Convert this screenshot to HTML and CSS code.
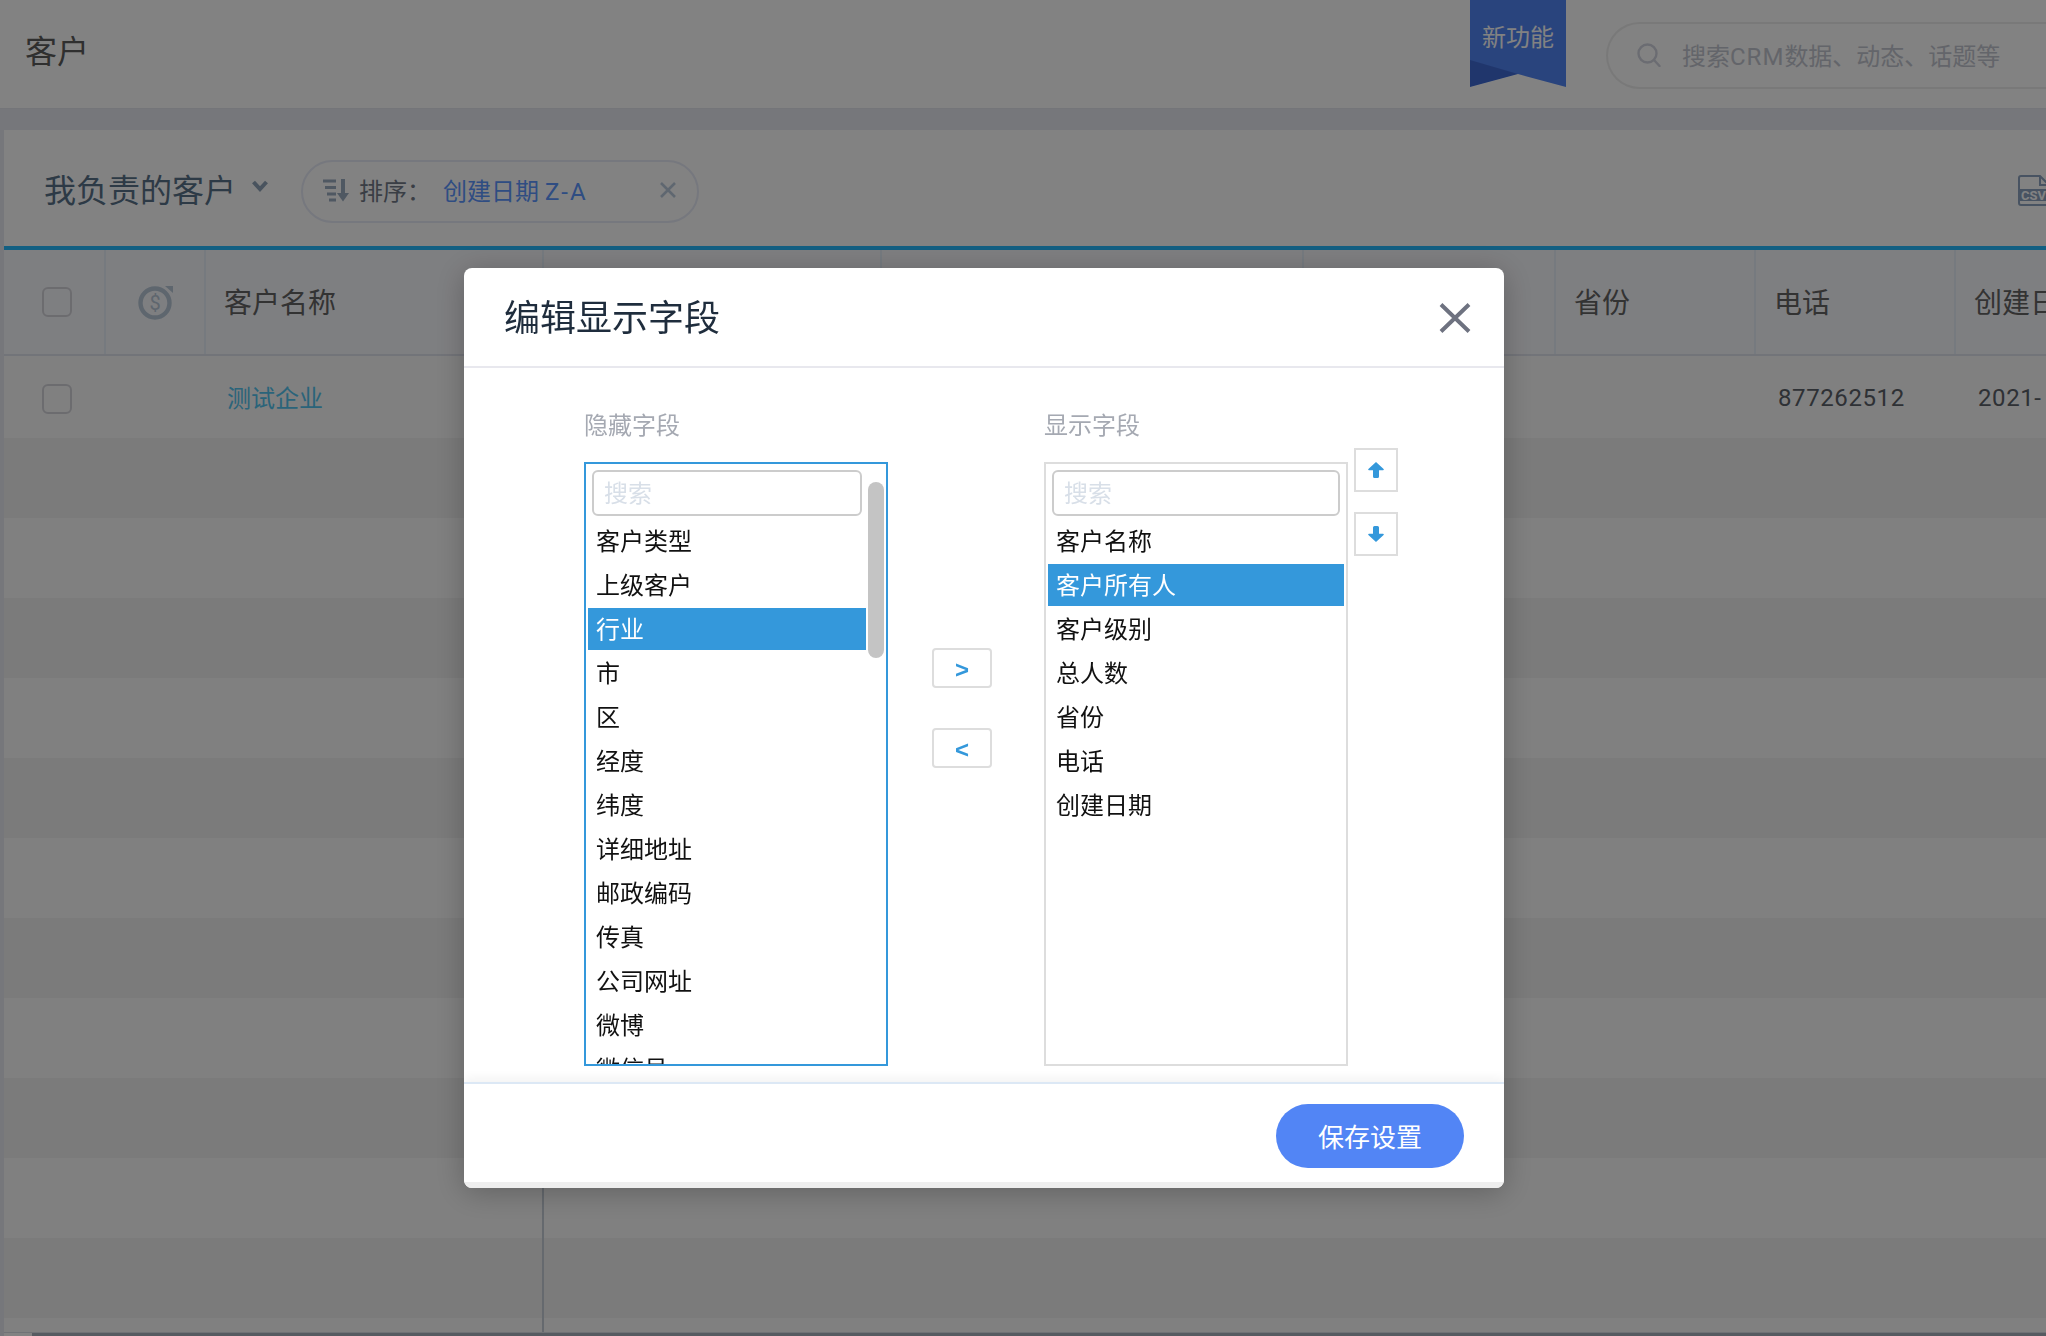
FILE: index.html
```html
<!DOCTYPE html>
<html lang="zh-CN">
<head>
    <meta charset="UTF-8">
    <title>客户</title>
    <link rel="stylesheet" href="styles.css">
</head>
<body>
    <header class="top-bar">
        <div class="page-title">客户</div>
        <div class="ribbon">新功能</div>
        <div class="global-search">
            <svg class="search-icon" width="24" height="24" viewBox="0 0 24 24" fill="none" stroke="currentColor" stroke-width="2.4">
                <circle cx="10.5" cy="10.5" r="9"/>
                <path d="M17 17l5.5 6" stroke-linecap="round"/>
            </svg>
            <span>搜索<span class="search-latin">CRM</span>数据、动态、话题等</span>
        </div>
    </header>

    <section class="panel">
        <div class="toolbar">
            <div class="view-name">我负责的客户</div>
            <svg class="view-caret" width="16" height="12" viewBox="0 0 16 12" fill="none" stroke="currentColor" stroke-width="4">
                <path d="M1.5 2l6.5 7 6.500-7"/>
            </svg>
            <div class="sort-pill">
                <svg class="sort-icon" width="26" height="24" viewBox="0 0 26 24" fill="none" stroke="currentColor" stroke-width="2.800">
                    <path d="M0 3h13M2 9.500h11M4 16h9M6 22h7"/>
                    <path d="M20 1v18" stroke-width="4"/>
                    <path d="M14 15h12L20 23.500z" fill="currentColor" stroke="none"/>
                </svg>
                <span class="sort-label">排序：</span>
                <span class="sort-value">创建日期 <span class="sort-order">Z-A</span></span>
                <svg class="sort-clear" width="16" height="16" viewBox="0 0 16 16" stroke="currentColor" stroke-width="2.600">
                    <path d="M1 1l14 14M15 1L1 15"/>
                </svg>
            </div>
            <svg class="csv-icon" width="34" height="32" viewBox="0 0 34 32">
                <path d="M3 1h19l9 9v20H3a2 2 0 0 1-2-2V3a2 2 0 0 1 2-2z" fill="none" stroke="currentColor" stroke-width="2"/>
                <path d="M22 1v9h9" fill="none" stroke="currentColor" stroke-width="2"/>
                <rect x="1" y="14" width="33" height="12" fill="currentColor"/>
                <text x="3" y="24.500" class="csv-text">CSV</text>
            </svg>
        </div>

        <div class="table-head">
            <div class="cell"><span class="checkbox"></span></div>
            <div class="cell cell-coin">
                <svg width="36" height="36" viewBox="0 0 36 36" fill="none" stroke="currentColor" stroke-width="4.400">
                    <circle cx="17" cy="19" r="14.500"/>
                    <path d="M27 2h8v7z" fill="currentColor" stroke="none"/>
                    <text x="17" y="26" class="coin-text">$</text>
                </svg>
            </div>
            <div class="cell">客户名称</div>
            <div class="cell"></div>
            <div class="cell"></div>
            <div class="cell"></div>
            <div class="cell">省份</div>
            <div class="cell">电话</div>
            <div class="cell">创建日期</div>
        </div>

        <div class="table-body">
            <div class="row row-first">
                <div class="cell"><span class="checkbox"></span></div>
                <div class="cell"></div>
                <div class="cell"><a class="name-link">测试企业</a></div>
                <div class="cell"></div>
                <div class="cell"></div>
                <div class="cell"></div>
                <div class="cell"></div>
                <div class="cell number">877262512</div>
                <div class="cell number">2021-</div>
            </div>
            <div class="row"></div>
            <div class="row"></div>
            <div class="row"></div>
            <div class="row"></div>
            <div class="row"></div>
            <div class="row"></div>
            <div class="row"></div>
            <div class="row"></div>
            <div class="row"></div>
            <div class="row"></div>
            <div class="row"></div>
            <div class="row"></div>
        </div>
        <div class="table-scroll"></div>
    </section>

    <div class="overlay"></div>

    <div class="modal">
        <div class="modal-head">
            <h2>编辑显示字段</h2>
            <svg class="modal-close" width="32" height="30" viewBox="0 0 32 30" stroke="currentColor" stroke-width="4">
                <path d="M2 1.500l28 27M30 1.500l-28 27"/>
            </svg>
        </div>
        <div class="modal-body">
            <div class="field-col">
                <div class="field-label">隐藏字段</div>
                <div class="field-box field-box-active">
                    <input class="field-search" type="text" placeholder="搜索">
                    <div class="option">客户类型</div>
                    <div class="option">上级客户</div>
                    <div class="option selected">行业</div>
                    <div class="option">市</div>
                    <div class="option">区</div>
                    <div class="option">经度</div>
                    <div class="option">纬度</div>
                    <div class="option">详细地址</div>
                    <div class="option">邮政编码</div>
                    <div class="option">传真</div>
                    <div class="option">公司网址</div>
                    <div class="option">微博</div>
                    <div class="option">微信号</div>
                    <div class="scroll-thumb"></div>
                </div>
            </div>
            <div class="move-col">
                <button class="move-btn">&gt;</button>
                <button class="move-btn">&lt;</button>
            </div>
            <div class="field-col">
                <div class="field-label">显示字段</div>
                <div class="field-box">
                    <input class="field-search" type="text" placeholder="搜索">
                    <div class="option">客户名称</div>
                    <div class="option selected">客户所有人</div>
                    <div class="option">客户级别</div>
                    <div class="option">总人数</div>
                    <div class="option">省份</div>
                    <div class="option">电话</div>
                    <div class="option">创建日期</div>
                </div>
            </div>
            <div class="order-col">
                <button class="order-btn">
                    <svg width="16" height="16" viewBox="0 0 16 16" fill="currentColor">
                        <path d="M8 0l7.600 7a.7.7 0 0 1-.5 1.200H11v6.300A1.500 1.500 0 0 1 9.500 16h-3A1.500 1.500 0 0 1 5 14.500V8.200H.9A.7.7 0 0 1 .4 7z"/>
                    </svg>
                </button>
                <button class="order-btn">
                    <svg width="16" height="16" viewBox="0 0 16 16" fill="currentColor">
                        <path d="M8 16L.4 9a.7.7 0 0 1 .5-1.200H5V1.500A1.500 1.500 0 0 1 6.500 0h3A1.500 1.500 0 0 1 11 1.500v6.300h4.100a.7.7 0 0 1 .5 1.200z"/>
                    </svg>
                </button>
            </div>
        </div>
        <div class="modal-foot">
            <button class="save-btn">保存设置</button>
        </div>
    </div>
</body>
</html>
```

FILE: styles.css
```css
* {
    box-sizing: border-box;
}
html, body {
    height: 100%;
}
body {
    margin: 0;
    height: 1336px;
    overflow: hidden;
    background: #e8e9f2;
    font-family: Roboto, "Noto Sans CJK SC", sans-serif;
    font-size: 24px;
    color: #666;
}

/* top bar */
.top-bar {
    display: flex;
    height: 109px;
    background: #fff;
    border-bottom: 1px solid #e4e5ee;
}
.page-title {
    flex: 1;
    padding: 30px 0 0 25px;
    font-size: 32px;
    line-height: 44px;
    color: #5c5c5c;
}
.ribbon {
    position: relative;
    width: 96px;
    height: 87px;
    padding-top: 21px;
    line-height: 34px;
    text-align: center;
    color: #fff;
    background: #5285f5;
    clip-path: polygon(0 0, 100% 0, 100% 100%, 50% 74px, 0 100%);
}
.ribbon::after {
    content: "";
    position: absolute;
    left: 0;
    top: 60px;
    width: 48px;
    height: 27px;
    background: rgba(10, 30, 120, 0.25);
    clip-path: polygon(0 0, 100% 52%, 0 100%);
}
.global-search {
    display: flex;
    align-items: center;
    flex: 0 0 440px;
    height: 67px;
    margin: 22px 0 0 40px;
    padding: 0 0 2px 29px;
    border: 2px solid #eee;
    border-right: none;
    border-radius: 34px 0 0 34px;
    color: #c3c6d0;
    white-space: nowrap;
}
.search-icon {
    margin-right: 21px;
    color: #d2d5df;
}
.search-latin {
    letter-spacing: 1px;
}

/* customer panel */
.panel {
    margin: 21px 0 0 4px;
    background: #fff;
    overflow: hidden;
}
.toolbar {
    display: flex;
    align-items: center;
    height: 116px;
    padding: 6px 0 0 40px;
}
.view-name {
    font-size: 32px;
    line-height: 44px;
    color: #58728a;
    margin-top: -1px;
}
.view-caret {
    margin: -10px 0 0 16px;
    color: #90a4b8;
}
.sort-pill {
    display: flex;
    align-items: center;
    width: 398px;
    height: 63px;
    margin-left: 33px;
    padding: 0 0 3px 20px;
    border: 2px solid #e8ebf8;
    border-radius: 32px;
}
.sort-icon {
    color: #9bacc0;
}
.sort-label {
    margin-left: 10px;
    width: 84px;
    color: #727a88;
}
.sort-value {
    width: 217px;
    color: #5c97ff;
    white-space: nowrap;
}
.sort-order {
    letter-spacing: 2px;
}
.sort-clear {
    color: #bacadc;
}
.csv-icon {
    flex: none;
    margin-left: auto;
    margin-right: -6px;
    color: #8ea4c0;
}
.csv-text {
    font-size: 13px;
    font-weight: 700;
    fill: #fff;
}

/* table */
.table-head, .row-first {
    display: grid;
    grid-template-columns: 102px 100px 338px 338px 422px 252px 200px 200px 200px;
}
.table-head {
    height: 110px;
    border-top: 4px solid #25baff;
    border-bottom: 2px solid #e0e3ed;
    background: #f8f9fd;
    font-size: 28px;
    color: #646464;
}
.table-head .cell {
    display: flex;
    align-items: center;
    padding: 0 0 2px 18px;
    border-right: 2px solid #e7f0fa;
    white-space: nowrap;
}
.table-head .cell-coin {
    justify-content: center;
    padding: 0 0 0 2px;
    color: #b8c8d8;
}
.coin-text {
    font-size: 20px;
    text-anchor: middle;
    fill: currentColor;
    stroke: none;
}
.checkbox {
    display: block;
    width: 30px;
    height: 30px;
    border: 2px solid #d4d4da;
    border-radius: 6px;
}
.table-head .cell:first-child {
    padding: 0 0 0 38px;
}
.table-body {
    position: relative;
    height: 976px;
    overflow: hidden;
}
.table-body::after {
    content: "";
    position: absolute;
    left: 538px;
    top: 0;
    bottom: 0;
    width: 2px;
    background: #c6ced8;
}
.row {
    height: 80px;
    background: #fbfbfb;
}
.row:nth-child(even) {
    background: #f1f1f1;
}
.row-first {
    height: 82px;
    color: #5a6068;
}
.row-first .cell {
    display: flex;
    align-items: center;
    padding: 0 0 2px 21px;
    white-space: nowrap;
}
.row-first .cell:first-child {
    padding: 3px 0 0 38px;
}
.row-first .number {
    padding: 2px 0 0 22px;
    letter-spacing: 0.6px;
}
.name-link {
    color: #54c4f0;
}
.table-scroll {
    height: 4px;
    border-top: 1px solid #dcdfe8;
    background: linear-gradient(#a9b3bf, #a9b3bf) no-repeat 28px 0;
}

.overlay {
    position: fixed;
    left: 0;
    top: 0;
    right: 0;
    bottom: 0;
    background: rgba(0, 0, 0, 0.49);
}

/* field editor dialog */
.modal {
    position: fixed;
    left: 464px;
    top: 268px;
    display: flex;
    flex-direction: column;
    width: 1040px;
    height: 920px;
    background: #fff;
    border-radius: 8px;
    box-shadow: 0 4px 30px rgba(0, 0, 0, 0.25);
    overflow: hidden;
}
.modal-head {
    display: flex;
    align-items: center;
    justify-content: space-between;
    height: 100px;
    padding: 0 33px 0 40px;
    border-bottom: 2px solid #e8e8ee;
}
.modal-head h2 {
    margin: -5px 0 0;
    font-size: 36px;
    font-weight: 400;
    color: #1f2d3d;
}
.modal-close {
    margin-top: 2px;
    color: #6e7280;
}
.modal-body {
    display: flex;
    align-items: flex-start;
    flex: 1;
    padding: 40px 0 0 120px;
}
.field-col {
    width: 304px;
}
.field-label {
    height: 34px;
    margin-bottom: 20px;
    line-height: 36px;
    color: #a5a9b2;
}
.field-box {
    position: relative;
    height: 604px;
    padding: 0 2px;
    border: 2px solid #ddd;
    overflow: hidden;
}
.field-box-active {
    padding-right: 20px;
    border-color: #3498db;
}
.field-search {
    display: block;
    width: calc(100% - 8px);
    height: 46px;
    margin: 6px 4px 4px;
    padding: 2px 0 0 10px;
    border: 2px solid #ccc;
    border-radius: 6px;
    font: inherit;
    outline: none;
}
.field-search::placeholder {
    color: #d8dfe8;
}
.option {
    height: 42px;
    margin-bottom: 2px;
    padding-left: 8px;
    line-height: 44px;
    color: #111;
    white-space: nowrap;
}
.option.selected {
    background: #3498db;
    color: #fff;
}
.scroll-thumb {
    position: absolute;
    left: 282px;
    top: 18px;
    width: 16px;
    height: 176px;
    background: #c4c4c4;
    border-radius: 8px;
}
.move-col {
    display: flex;
    flex-direction: column;
    gap: 40px;
    width: 60px;
    margin: 240px 52px 0 44px;
}
.move-btn {
    height: 40px;
    padding: 4px 0 0;
    background: #fff;
    border: 2px solid #ddd;
    border-radius: 4px;
    color: #3498db;
    font: 700 24px "Liberation Sans", sans-serif;
}
.order-col {
    display: flex;
    flex-direction: column;
    gap: 20px;
    margin: 40px 0 0 6px;
}
.order-btn {
    display: flex;
    align-items: center;
    justify-content: center;
    width: 44px;
    height: 44px;
    padding: 0;
    background: #fff;
    border: 2px solid #ddd;
    color: #3498db;
}
.modal-foot {
    display: flex;
    justify-content: flex-end;
    height: 106px;
    padding: 20px 40px 0 0;
    background: #fff;
    border-top: 2px solid #dce8f5;
    border-bottom: 6px solid #eee;
    box-shadow: 0 -4px 10px rgba(0, 0, 0, 0.05);
}
.save-btn {
    width: 188px;
    height: 64px;
    padding: 0 0 2px;
    background: #5285f5;
    border: none;
    border-radius: 32px;
    color: #fff;
    font: inherit;
    font-size: 26px;
}
```
